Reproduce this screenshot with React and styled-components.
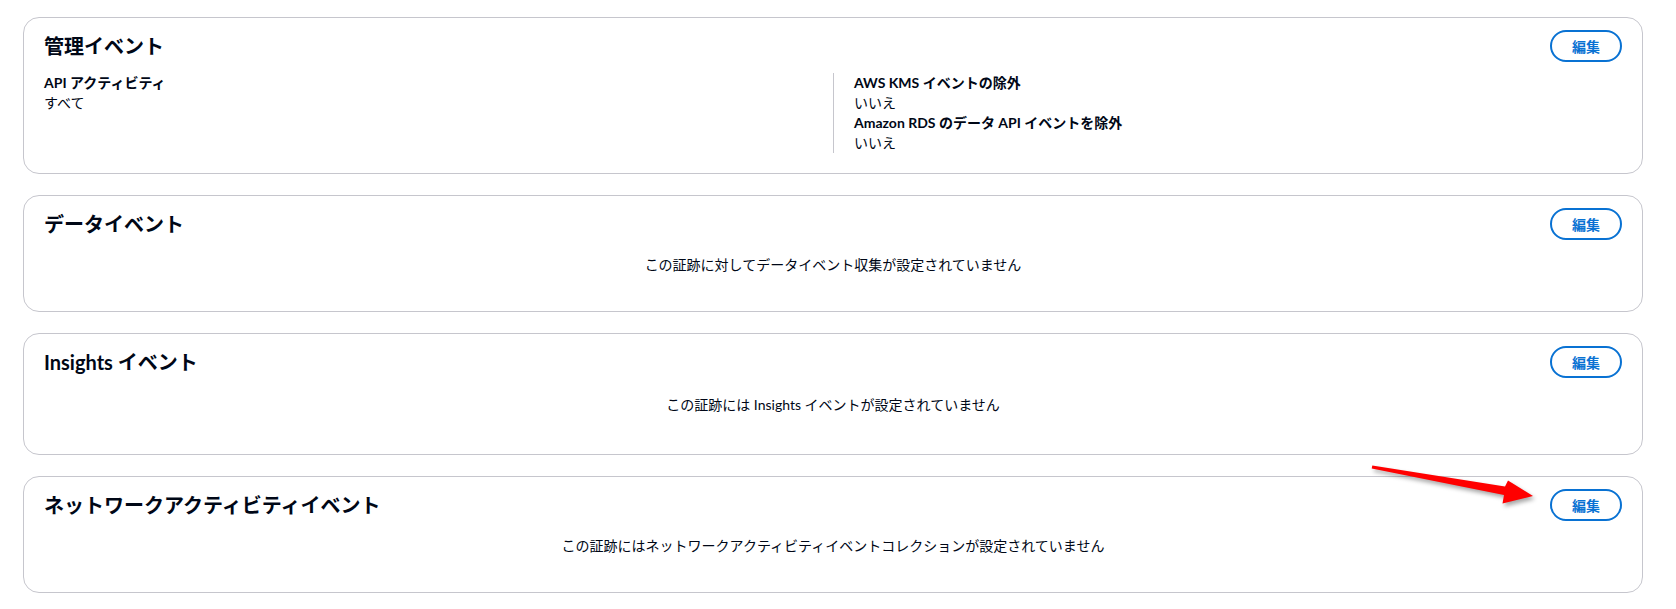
import React from "react";
import styled, { createGlobalStyle } from "styled-components";

const GlobalStyle = createGlobalStyle`
	body {
		margin: 0;
		background: #ffffff;
		color: #000716;
		font-family: "Lato", "Noto Sans CJK JP", sans-serif;
	}
`;

const Page = styled.div`
	position: relative;
	display: flex;
	flex-direction: column;
	gap: 21px;
	padding: 17px 33px 16px 23px;
`;

const Card = styled.section`
	border: 1px solid #c6c6cd;
	border-radius: 16px;
	background: #ffffff;
`;

const Header = styled.div`
	display: flex;
	justify-content: space-between;
	align-items: center;
	padding: 12px 20px 0 20px;
`;

const Title = styled.h2`
	margin: 0;
	font-size: 20px;
	line-height: 24px;
	font-weight: 700;
	color: #000716;
`;

const EditButton = styled.button`
	width: 72px;
	height: 32px;
	padding: 0;
	border: 2px solid #0972d3;
	border-radius: 20px;
	background: #ffffff;
	color: #0972d3;
	font-family: inherit;
	font-size: 14px;
	font-weight: 700;
	cursor: pointer;
`;

const Body = styled.div`
	padding: 11px 20px 20px 20px;
	font-size: 14px;
	line-height: 20px;
`;

const Columns = styled.div`
	display: grid;
	grid-template-columns: 1fr 1fr;
`;

const Column = styled.div`
	${props => props.divided && "border-left: 1px solid #c6c6cd; padding-left: 20px;"}
`;

const Label = styled.div`
	font-weight: 700;
`;

const Value = styled.div`
	font-weight: 400;
`;

const Empty = styled.p`
	margin: 0;
	padding: ${props => (props.extra ? "6px 0 19px" : "4px 0 16px")};
	text-align: center;
	font-size: 14px;
	line-height: 20px;
`;

const Arrow = styled.svg`
	position: absolute;
	left: 1360px;
	top: 455px;
	filter: drop-shadow(2px 3px 2px rgba(0, 0, 0, 0.35));
	pointer-events: none;
`;

const Field = ({ label, value }) => (
	<div>
		<Label>{label}</Label>
		<Value>{value}</Value>
	</div>
);

const Panel = ({ title, children }) => (
	<Card>
		<Header>
			<Title>{title}</Title>
			<EditButton>編集</EditButton>
		</Header>
		{children}
	</Card>
);

const App = () => (
	<Page>
		<GlobalStyle />
		<Panel title="管理イベント">
			<Body>
				<Columns>
					<Column>
						<Field label="API アクティビティ" value="すべて" />
					</Column>
					<Column divided>
						<Field label="AWS KMS イベントの除外" value="いいえ" />
						<Field label="Amazon RDS のデータ API イベントを除外" value="いいえ" />
					</Column>
				</Columns>
			</Body>
		</Panel>
		<Panel title="データイベント">
			<Body>
				<Empty>この証跡に対してデータイベント収集が設定されていません</Empty>
			</Body>
		</Panel>
		<Panel title="Insights イベント">
			<Body>
				<Empty extra>この証跡には Insights イベントが設定されていません</Empty>
			</Body>
		</Panel>
		<Panel title="ネットワークアクティビティイベント">
			<Body>
				<Empty>
					この証跡にはネットワークアクティビティイベントコレクションが設定されていません
				</Empty>
			</Body>
		</Panel>
		<Arrow width="190" height="60" viewBox="0 0 190 60">
			<polygon
				points="12.3,10.4 145,31.6 148,25.5 173,41 142.5,48.5 144,40 11.7,13.6"
				fill="#ff0000"
			/>
		</Arrow>
	</Page>
);

export default App;
